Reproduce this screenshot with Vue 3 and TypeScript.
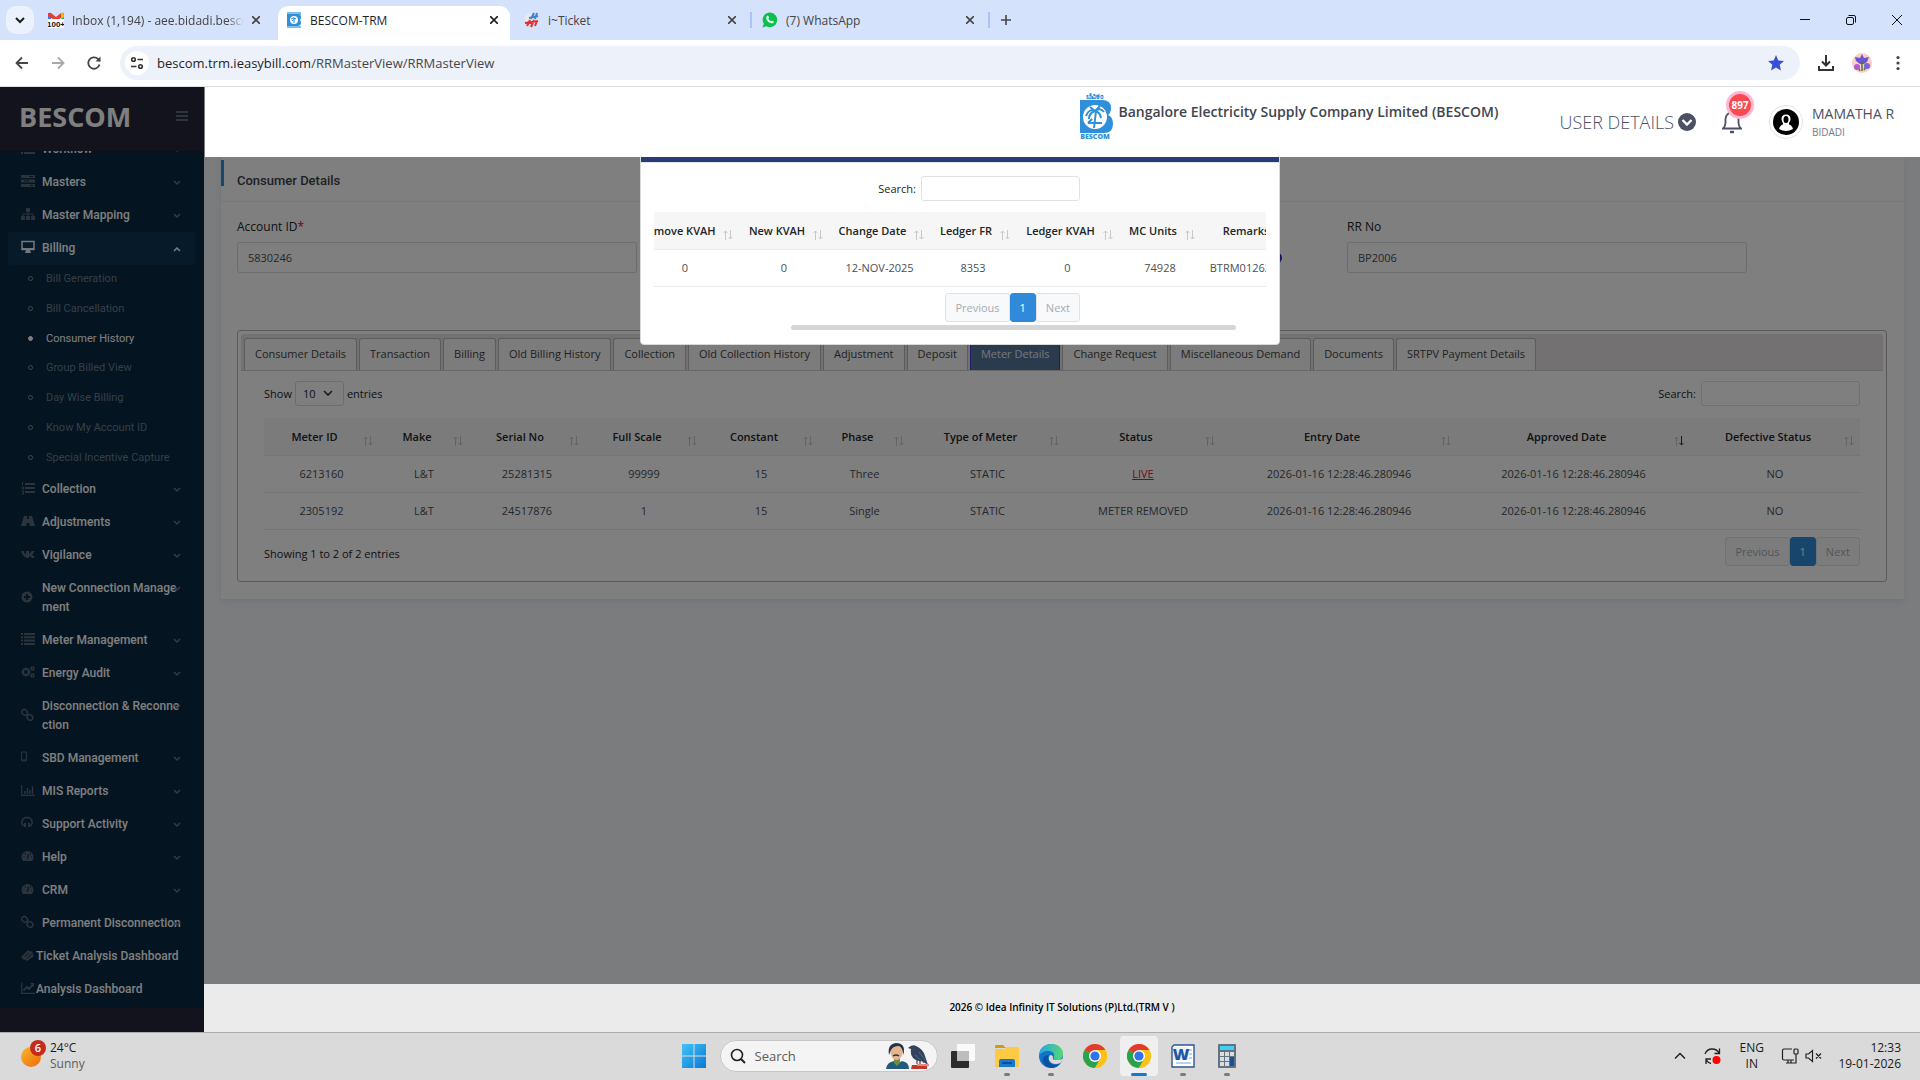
<script setup lang="ts">
import { ref } from 'vue'

interface BrowserTab { title: string; icon: string; active?: boolean; faded?: boolean }
interface MenuItem { label: string; icon: string; chevron: boolean; open?: boolean; tight?: boolean; children?: string[] }

const glyphs: Record<string, string> = {
  mail: '<rect x="0" y="1" width="3" height="7" fill="#2f7de9"/><rect x="13" y="1" width="3" height="7" fill="#2aa14d"/><path d="M0 2Q1 0 3 1L8 5l5-4q3-1 3 1v2L8 9 0 4z" fill="#ea3a32"/><path d="M13 1q3-1 3 2v2l-3 2z" fill="#fbbc04"/><rect y="7" width="16" height="9" fill="#fff"/><text x="8" y="15" font-size="8" font-weight="700" text-anchor="middle" font-family="Liberation Sans, sans-serif" fill="#111">100+</text>',
  ticket: '<circle cx="5" cy="6" r="4.500" fill="#e9e9ee"/><path d="M3 14l3-6M7 15l3-7M11 14l2-5M1 11l13-2" stroke="#e8302c" stroke-width="2" fill="none"/><path d="M7 7l3-6M11 7l2-6M5 6l9-2" stroke="#3f86c4" stroke-width="2" fill="none"/>',
  whatsapp: '<path d="M8 .5a7.300 7.300 0 1 1-3.600 13.700L.5 15.500l1.300-3.800A7.300 7.300 0 0 1 8 .5z" fill="#0ac14e"/><path d="M5 4.200c.6-.6 1.200-.4 1.500.3l.5 1.300-.7 1c.6 1.200 1.400 2 2.600 2.500l1-.9 1.500.8c.6.4.4 1.100 0 1.600-1 1-2.400.7-4-.2C5.600 9.500 4.300 7.600 4.200 6c0-.8.3-1.400.8-1.800z" fill="#fff"/>',
  bescom: '<rect x="1" y="0" width="14" height="3" fill="#7dbdea"/><path d="M1 2h10q4 0 4 3 0 2-1 3 1 1 1 3 0 3-4 3H1z" fill="#2f8fd8"/><circle cx="8" cy="8" r="4" fill="#fff"/><path d="M5 7q3-3 5 0M8 6v5M6 9l3-3" stroke="#2f8fd8" fill="none"/><rect x="1" y="14" width="14" height="2" fill="#7dbdea"/>',
}

const menuGlyphs: Record<string, string> = {
  server: '<path d="M0 1h14v3H0zM0 5.500h14v3H0zM0 10h14v3H0z" fill="currentColor"/><path d="M8 2.500h4M3 7h5M9 11.500h3" stroke="#082842"/>',
  sitemap: '<path d="M5 1h4v4H5zM0 9h4v4H0zM5 9h4v4H5zM10 9h4v4h-4z" fill="currentColor"/><path d="M7 5v4M2 9V7h10v2" fill="none" stroke="currentColor"/>',
  desktop: '<path d="M1 1.500h12v8H1z" fill="none" stroke="currentColor" stroke-width="1.500"/><path d="M1 8h12v2H1zM5 10h4l1 3H4z" fill="currentColor"/>',
  listOl: '<path d="M4 3h10M4 7h10M4 11h10" stroke="currentColor" stroke-width="2"/><path d="M1.500 1v3M0.500 6h2v2h-2M0.500 10h2v3h-2" fill="none" stroke="currentColor"/>',
  road: '<path d="M3 2h3.200L6 5h2l-.2-3H11l3 10H8.500L8.300 9H5.700l-.2 3H0z" fill="currentColor"/>',
  vk: '<path d="M0 4h2.500Q4 7.500 5 7.500V4h3v3Q9.500 6.500 10.500 4H13.500Q13 6 11 7.500q2 1.500 3 3.500h-3Q9.500 9 8 9v2H6.500Q2.500 11 0 4z" fill="currentColor"/>',
  plus: '<circle cx="6" cy="7" r="5.500" fill="currentColor"/><path d="M6 4v6M3 7h6" stroke="#082842" stroke-width="2"/>',
  list: '<path d="M3 2h11M3 5.300h11M3 8.600h11M3 12h11" stroke="currentColor" stroke-width="2"/><path d="M0 2h2M0 5.300h2M0 8.600h2M0 12h2" stroke="currentColor" stroke-width="2"/>',
  gears: '<circle cx="5" cy="7" r="3" fill="none" stroke="currentColor" stroke-width="2"/><path d="M5 2.500v1.500M5 10v1.500M.5 7H2M8 7h1.500M2 4l1 1M2 10l1-1M8 4L7 5M8 10L7 9" stroke="currentColor" stroke-width="1.500"/><circle cx="11.500" cy="3.500" r="1.500" fill="none" stroke="currentColor" stroke-width="1.500"/><circle cx="11.500" cy="10.500" r="1.500" fill="none" stroke="currentColor" stroke-width="1.500"/>',
  link: '<rect x="1" y="2" width="6" height="5" rx="2.500" transform="rotate(45 4 4)" fill="none" stroke="currentColor" stroke-width="1.500"/><rect x="6" y="7" width="6" height="5" rx="2.500" transform="rotate(45 9 9.500)" fill="none" stroke="currentColor" stroke-width="1.500"/>',
  mobile: '<rect x=".5" y="2" width="5" height="9" rx="1" fill="none" stroke="currentColor" stroke-width="1.200"/><path d="M1 10h4" stroke="currentColor"/>',
  bars: '<path d="M.7 2v10.300H14" fill="none" stroke="currentColor" stroke-width="1.200"/><path d="M4 8v3M6.500 5v6M9 7v4M11.500 3.500V11" stroke="currentColor" stroke-width="1.500"/>',
  headphones: '<path d="M2.500 10Q.7 8 .8 6.500C1.200 3 3.500 1.500 6 1.500s4.800 1.500 5.200 5Q11.300 8 9.500 10" fill="none" stroke="currentColor" stroke-width="1.500"/><path d="M3 7h2v4H3zM7 7h2v4H7z" fill="currentColor"/>',
  dash: '<path d="M2 12A6 6 0 1 1 11 12z" fill="currentColor"/><path d="M6.500 10L7.500 5M2.500 8h1M4 4.500l.8.800M9 5.300l.8-.8M10 8h1" stroke="#082842" stroke-width="1.200"/>',
  ticketMenu: '<path d="M0 9l7-7 1.500 1.500 1.500-.5 2 2-.5 1.500L13 8l-7 5-1.500-1.500L3 12l-2-2z" fill="currentColor"/><path d="M3.500 9l4.500-4.500M6 10.500L10.500 6" stroke="#082842"/>',
  line: '<path d="M.7 1.500v10.800H14" fill="none" stroke="currentColor" stroke-width="1.200"/><path d="M2.500 9.500L6 6l2 2 4-4.500" fill="none" stroke="currentColor" stroke-width="2"/><path d="M9 2h4v4z" fill="currentColor"/>',
}

const browserTabs: BrowserTab[] = [
  { title: 'Inbox (1,194) - aee.bidadi.besco', icon: 'mail', faded: true },
  { title: 'BESCOM-TRM', icon: 'bescom', active: true },
  { title: 'i~Ticket', icon: 'ticket' },
  { title: '(7) WhatsApp', icon: 'whatsapp' },
]

const menu: MenuItem[] = [
  { label: 'Workflow', icon: 'list', chevron: true },
  { label: 'Masters', icon: 'server', chevron: true },
  { label: 'Master Mapping', icon: 'sitemap', chevron: true },
  {
    label: 'Billing', icon: 'desktop', chevron: true, open: true,
    children: ['Bill Generation', 'Bill Cancellation', 'Consumer History', 'Group Billed View', 'Day Wise Billing', 'Know My Account ID', 'Special Incentive Capture'],
  },
  { label: 'Collection', icon: 'listOl', chevron: true },
  { label: 'Adjustments', icon: 'road', chevron: true },
  { label: 'Vigilance', icon: 'vk', chevron: true },
  { label: 'New Connection Management', icon: 'plus', chevron: true },
  { label: 'Meter Management', icon: 'list', chevron: true },
  { label: 'Energy Audit', icon: 'gears', chevron: true },
  { label: 'Disconnection & Reconnection', icon: 'link', chevron: true },
  { label: 'SBD Management', icon: 'mobile', chevron: true },
  { label: 'MIS Reports', icon: 'bars', chevron: true },
  { label: 'Support Activity', icon: 'headphones', chevron: true },
  { label: 'Help', icon: 'dash', chevron: true },
  { label: 'CRM', icon: 'dash', chevron: true },
  { label: 'Permanent Disconnection', icon: 'link', chevron: true },
  { label: 'Ticket Analysis Dashboard', icon: 'ticketMenu', chevron: false, tight: true },
  { label: 'Analysis Dashboard', icon: 'line', chevron: false, tight: true },
]

const detailTabs = ['Consumer Details', 'Transaction', 'Billing', 'Old Billing History', 'Collection', 'Old Collection History', 'Adjustment', 'Deposit', 'Meter Details', 'Change Request', 'Miscellaneous Demand', 'Documents', 'SRTPV Payment Details']
const activeTab = ref('Meter Details')

const meterColumns = [
  { label: 'Meter ID', width: 115 }, { label: 'Make', width: 90 }, { label: 'Serial No', width: 116 },
  { label: 'Full Scale', width: 118 }, { label: 'Constant', width: 116 }, { label: 'Phase', width: 91 },
  { label: 'Type of Meter', width: 155 }, { label: 'Status', width: 156 }, { label: 'Entry Date', width: 236 },
  { label: 'Approved Date', width: 233 }, { label: 'Defective Status', width: 170 },
]
const totalWidth = meterColumns.reduce((sum, c) => sum + c.width, 0)
const meterRows = [
  ['6213160', 'L&T', '25281315', '99999', '15', 'Three', 'STATIC', 'LIVE', '2026-01-16 12:28:46.280946', '2026-01-16 12:28:46.280946', 'NO'],
  ['2305192', 'L&T', '24517876', '1', '15', 'Single', 'STATIC', 'METER REMOVED', '2026-01-16 12:28:46.280946', '2026-01-16 12:28:46.280946', 'NO'],
]

const changeColumns = [
  { label: 'Remove KVAH', width: 108 }, { label: 'New KVAH', width: 90 }, { label: 'Change Date', width: 101 },
  { label: 'Ledger FR', width: 86 }, { label: 'Ledger KVAH', width: 103 }, { label: 'MC Units', width: 82 }, { label: 'Remarks', width: 104 },
]
const changeRow = ['0', '0', '12-NOV-2025', '8353', '0', '74928', 'BTRM012620261']

const accountId = ref('5830246')
const rrNo = ref('BP2006')
const pageSize = ref('10')
const tableSearch = ref('')
const modalSearch = ref('')
</script>

<template>
  <div class="screen">
    <header class="chrome">
      <div class="tabstrip">
        <button class="tab-search" aria-label="Search tabs"><svg width="10" height="8" viewBox="0 0 10 8"><path d="M1 2l4 4 4-4" fill="none" stroke="#1f1f1f" stroke-width="2" /></svg></button>
        <div v-for="t in browserTabs" :key="t.title" class="btab" :class="{ active: t.active, divided: !t.active && !t.faded }">
          <div class="btab-body">
            <svg class="fav" viewBox="0 0 16 16" v-html="glyphs[t.icon]"></svg>
            <span class="btab-title" :class="{ faded: t.faded }">{{ t.title }}</span>
            <button class="close" aria-label="Close tab"><svg width="8" height="8" viewBox="0 0 8 8"><path d="M0 0l8 8M8 0L0 8" stroke="currentColor" stroke-width="1.600" /></svg></button>
          </div>
        </div>
        <button class="new-tab" aria-label="New tab"><svg width="10" height="10" viewBox="0 0 10 10"><path d="M5 0v10M0 5h10" stroke="#474747" stroke-width="1.600" /></svg></button>
        <div class="window-controls">
          <button aria-label="Minimize"><svg width="10" height="10" viewBox="0 0 10 10"><path d="M0 4.500h10" stroke="#111" /></svg></button>
          <button aria-label="Restore"><svg width="10" height="10" viewBox="0 0 10 10"><rect x=".5" y="2.500" width="7" height="7" rx="1.500" fill="none" stroke="#111" /><path d="M2.500 .5H8Q9.500.5 9.500 2V7.500" fill="none" stroke="#111" /></svg></button>
          <button aria-label="Close"><svg width="10" height="10" viewBox="0 0 10 10"><path d="M0 0l10 10M10 0L0 10" stroke="#111" /></svg></button>
        </div>
      </div>
      <div class="toolbar">
        <button class="tool" aria-label="Back"><svg width="16" height="16" viewBox="0 0 16 16"><path d="M14 8H3M8 2.500L2.500 8 8 13.500" fill="none" stroke="#474747" stroke-width="1.800" /></svg></button>
        <button class="tool" aria-label="Forward"><svg width="16" height="16" viewBox="0 0 16 16"><path d="M2 8h11M8 2.500L13.500 8 8 13.500" fill="none" stroke="#a8a8a8" stroke-width="1.800" /></svg></button>
        <button class="tool" aria-label="Reload"><svg width="16" height="16" viewBox="0 0 16 16"><path d="M13.500 9.500A5.700 5.700 0 1 1 12 4l2 2" fill="none" stroke="#474747" stroke-width="1.800" /><path d="M14.500 1.500v5h-5z" fill="#474747" /></svg></button>
        <div class="omnibox">
          <button class="site-info" aria-label="Site information"><svg width="14" height="14" viewBox="0 0 14 14" fill="none" stroke="#333" stroke-width="1.600"><circle cx="3.500" cy="3.500" r="1.800" /><path d="M7.500 3.500H13M1 10.500h5.500" /><circle cx="10.500" cy="10.500" r="1.800" /></svg></button>
          <p class="url"><span>bescom.trm.ieasybill.com</span>/RRMasterView/RRMasterView</p>
          <svg class="star" width="16" height="16" viewBox="0 0 16 16"><path d="M8 0l2.300 5.400 5.700.5-4.300 3.800L13 15.500l-5-3-5 3 1.300-5.800L0 5.900l5.700-.5z" fill="#3b50d6" /></svg>
        </div>
        <div class="tool-right">
          <button class="tool" aria-label="Downloads"><svg width="18" height="18" viewBox="0 0 18 18" fill="none" stroke="#333" stroke-width="2"><path d="M9 1v10M5 7.500l4 4 4-4M2 12v4h14v-4" /></svg></button>
          <button class="tool" aria-label="Profile"><svg width="20" height="20" viewBox="0 0 20 20"><circle cx="10" cy="10" r="10" fill="#f8cfc8" /><path d="M10 1l2 4 5-1-2 5-3 2H8L4 8 3 4l5 1z" fill="#6a55cf" /><path d="M10 9v9M8 18l-2-4M12 17l3-5" stroke="#4c7a3a" stroke-width="1.500" /><circle cx="5" cy="14" r="3" fill="#b25ad0" /><circle cx="15" cy="13" r="3" fill="#7d62d8" /></svg></button>
          <button class="tool" aria-label="Menu"><svg width="4" height="16" viewBox="0 0 4 16" fill="#444"><circle cx="2" cy="2.500" r="1.600" /><circle cx="2" cy="8" r="1.600" /><circle cx="2" cy="13.500" r="1.600" /></svg></button>
        </div>
      </div>
    </header>

    <div class="page">
      <aside class="sidebar">
        <div class="brand">
          <span>BESCOM</span>
          <button aria-label="Toggle menu"><svg width="12" height="10" viewBox="0 0 12 10"><path d="M0 1h12M0 5h12M0 9h12" stroke="#5d6b7c" stroke-width="2" /></svg></button>
        </div>
        <nav class="nav">
          <ul class="menu">
            <li v-for="m in menu" :key="m.label">
              <a href="#" class="item" :class="{ open: m.open, tight: m.tight }">
                <svg class="menu-icon" viewBox="0 0 14 14" v-html="menuGlyphs[m.icon]"></svg>
                <span class="item-label">{{ m.label }}</span>
                <svg v-if="m.chevron" class="chev" viewBox="0 0 8 6"><path :d="m.open ? 'M1 5l3-3 3 3' : 'M1 1l3 3 3-3'" fill="none" stroke="currentColor" stroke-width="1.500" /></svg>
              </a>
              <ul v-if="m.children" class="submenu">
                <li v-for="c in m.children" :key="c"><a href="#" :class="{ current: c === 'Consumer History' }"><i class="dot"></i>{{ c }}</a></li>
              </ul>
            </li>
          </ul>
        </nav>
      </aside>

      <div class="main">
        <header class="topbar">
          <svg class="logo" width="34" height="48" viewBox="0 0 34 48">
            <text x="15" y="7" text-anchor="middle" font-size="8" font-weight="700" fill="#2f8fd8">ಬೆವಿಕಂ</text>
            <path d="M0 8h22q9 0 9 8 0 5-3 7 5 2 5 9 0 9-9 9H0z" fill="#2f8fd8" />
            <ellipse cx="15" cy="25" rx="12" ry="12" fill="#fff" />
            <path d="M6 24q3-8 9-5 5-4 9 1M15 19q-6 2-6 8M15 19q5 1 6 7M16 19l-2 17M8 31h14M12 27l-4 4M10 15l5 4 5-5" fill="none" stroke="#2f8fd8" stroke-width="2" />
            <text x="15" y="47" text-anchor="middle" font-size="7" font-weight="800" fill="#2f8fd8">BESCOM</text>
          </svg>
          <h1 class="company">Bangalore Electricity Supply Company Limited (BESCOM)</h1>
          <button class="user-details">USER DETAILS
            <svg width="18" height="18" viewBox="0 0 18 18"><circle cx="9" cy="9" r="9" fill="#4b5064" /><path d="M4.500 7L9 11.500 13.500 7" fill="none" stroke="#fff" stroke-width="2.400" /></svg>
          </button>
          <button class="bell" aria-label="Notifications">
            <svg width="20" height="24" viewBox="0 0 20 24" fill="none" stroke="#4b5064" stroke-width="1.800"><path d="M1 18.500h18Q16.500 16 16.500 13V9a6.500 6.500 0 0 0-13 0v4Q3.500 16 1 18.500z" /><path d="M8 22h4" stroke-width="2.400" /></svg>
            <span class="badge">897</span>
          </button>
          <div class="avatar"><svg width="26" height="26" viewBox="0 0 26 26"><circle cx="13" cy="13" r="13" fill="#000" /><path d="M6 20q1-4 4-4.500V14Q8.500 12.500 8.500 10q0-4.500 4.500-4.500t4.500 4.500q0 2.500-1.500 4v1.500Q19 16 20 20q-7 4-14 0z" fill="#fff" /><ellipse cx="13" cy="10.500" rx="2.500" ry="3.500" fill="#000" /></svg></div>
          <div class="who"><strong>MAMATHA R</strong><span>BIDADI</span></div>
        </header>

        <main class="content">
          <section class="card">
            <h2 class="card-head">Consumer Details</h2>
            <div class="card-body">
              <div class="fields">
                <div class="field">
                  <label for="account">Account ID<em>*</em></label>
                  <input id="account" v-model="accountId" type="text" />
                </div>
                <div class="field lookup"><button aria-label="Find account"><svg width="14" height="14" viewBox="0 0 14 14"><circle cx="7" cy="7" r="5" fill="none" stroke="#2630b8" stroke-width="2" /></svg></button></div>
                <div class="field">
                  <label for="rrno">RR No</label>
                  <input id="rrno" v-model="rrNo" type="text" />
                </div>
              </div>

              <div class="panel">
                <div class="detail-tabs" role="tablist">
                  <button v-for="t in detailTabs" :key="t" role="tab" :class="{ on: t === activeTab }" @click="activeTab = t">{{ t }}</button>
                </div>
                <div class="panel-body">
                  <div class="controls">
                    <label class="length">Show
                      <span class="select-wrap">
                        <select v-model="pageSize"><option>10</option><option>25</option></select>
                        <svg width="10" height="6" viewBox="0 0 10 6"><path d="M1 1l4 4 4-4" fill="none" stroke="#333" stroke-width="1.600" /></svg>
                      </span>
                      entries</label>
                    <label class="search">Search:<input v-model="tableSearch" type="text" /></label>
                  </div>
                  <table class="grid">
                    <colgroup><col v-for="c in meterColumns" :key="c.label" :style="{ width: (c.width / totalWidth) * 100 + '%' }" /></colgroup>
                    <thead>
                      <tr><th v-for="c in meterColumns" :key="c.label"><div class="th">{{ c.label }}<svg class="sort" viewBox="0 0 10 10"><path d="M2.500 10V1M.5 3l2-2 2 2" /><path :class="{ dark: c.label === 'Approved Date' }" d="M7.500 0v9M5.500 7l2 2 2-2" /></svg></div></th></tr>
                    </thead>
                    <tbody>
                      <tr v-for="(r, i) in meterRows" :key="i">
                        <td v-for="(v, j) in r" :key="j"><a v-if="v === 'LIVE'" href="#" class="live">{{ v }}</a><template v-else>{{ v }}</template></td>
                      </tr>
                    </tbody>
                  </table>
                  <div class="table-foot">
                    <p>Showing 1 to 2 of 2 entries</p>
                    <div class="pager"><button disabled>Previous</button><button class="cur">1</button><button disabled>Next</button></div>
                  </div>
                </div>
              </div>
            </div>
          </section>
        </main>
        <footer class="footer">2026 © Idea Infinity IT Solutions (P)Ltd.(TRM V )</footer>
      </div>

      <div class="backdrop"></div>
      <div class="modal" role="dialog" aria-label="Meter change details">
        <div class="modal-head"></div>
        <div class="modal-body">
          <label class="search modal-search">Search:<input v-model="modalSearch" type="text" /></label>
          <div class="scroller">
            <table class="grid wide">
              <colgroup><col v-for="c in changeColumns" :key="c.label" :style="{ width: c.width + 'px' }" /></colgroup>
              <thead>
                <tr><th v-for="c in changeColumns" :key="c.label"><div class="th">{{ c.label }}<svg class="sort" viewBox="0 0 10 10"><path d="M2.500 10V1M.5 3l2-2 2 2" /><path d="M7.500 0v9M5.500 7l2 2 2-2" /></svg></div></th></tr>
              </thead>
              <tbody><tr><td v-for="(v, j) in changeRow" :key="j">{{ v }}</td></tr></tbody>
            </table>
          </div>
          <div class="pager modal-pager"><button disabled>Previous</button><button class="cur">1</button><button disabled>Next</button></div>
          <div class="track"><div class="thumb"></div></div>
        </div>
      </div>
    </div>

    <footer class="taskbar">
      <div class="weather">
        <svg width="26" height="28" viewBox="0 0 26 28">
          <defs><linearGradient id="sun" x1="0" y1="0" x2="1" y2="1"><stop offset="0" stop-color="#f5b729" /><stop offset="1" stop-color="#f26a0c" /></linearGradient></defs>
          <circle cx="10" cy="17" r="10" fill="url(#sun)" /><circle cx="17" cy="8" r="8" fill="#c42b1c" />
          <text x="17" y="12" text-anchor="middle" font-size="11" font-weight="600" fill="#fff">6</text>
        </svg>
        <p><span>24°C</span><small>Sunny</small></p>
      </div>
      <div class="dock">
        <button class="app" aria-label="Start"><svg width="24" height="24" viewBox="0 0 24 24"><defs><linearGradient id="win" x1="0" y1="0" x2="1" y2="1" gradientUnits="objectBoundingBox"><stop offset="0" stop-color="#42c3f7" /><stop offset="1" stop-color="#0a78d4" /></linearGradient></defs><path d="M0 0h11.500v11.500H0zM12.500 0H24v11.500H12.500zM0 12.500h11.500V24H0zM12.500 12.500H24V24H12.500z" fill="url(#win)" /></svg></button>
        <label class="task-search">
          <svg width="16" height="16" viewBox="0 0 16 16"><circle cx="7" cy="7" r="5.500" fill="none" stroke="#222" stroke-width="1.600" /><path d="M11 11l4 4" stroke="#222" stroke-width="2" /></svg>
          <input type="text" placeholder="Search" aria-label="Search" />
          <svg width="46" height="26" viewBox="0 0 46 26">
            <path d="M1 26q1-7 8-8l3 3 5-3q7 1 7 8z" fill="#235b7c" /><path d="M9 14h6v6l-3 3-3-3z" fill="#6d8f3d" /><ellipse cx="11.500" cy="9.500" rx="6" ry="7.500" fill="#e6b58c" /><path d="M4 12Q2 1 11 0q9 0 8 9l-1 3q0-7-4-9Q8 3 6 7z" fill="#26324a" /><path d="M8 13q3-2 6 0" stroke="#26324a" stroke-width="1.500" fill="none" />
            <path d="M23 5q4-4 8-2 7 3 9 10l3 9-6-4q-5 1-9-3-3-4-2-9z" fill="#33435e" /><path d="M30 12l9 8M34 9l6 8" stroke="#52688c" /><path d="M27 22h15v4H26z" fill="#c1372e" /><path d="M32 21h12v2H32z" fill="#e78780" /><path d="M32 17v4M35 17v4" stroke="#222" />
          </svg>
        </label>
        <button class="app" aria-label="Task view"><svg width="24" height="24" viewBox="0 0 24 24"><rect x="6" width="18" height="17" rx="1" fill="#fafafa" /><rect y="7" width="18" height="17" rx="1" fill="#2c2c2c" /><rect x="6" y="7" width="12" height="10" fill="#bdbdbd" /></svg></button>
        <button class="app run" aria-label="File Explorer"><svg width="24" height="24" viewBox="0 0 24 24"><path d="M0 2q0-1 1-1h7l3 3H0z" fill="#d99a06" /><path d="M0 5h10l2-2h11q1 0 1 1v18q0 1-1 1H1q-1 0-1-1z" fill="#fdcb43" /><path d="M4 23v-6q0-2 2-2h12q2 0 2 2v6z" fill="#1479cf" /><path d="M7 19h10" stroke="#0b4f94" stroke-width="2" /></svg></button>
        <button class="app run" aria-label="Edge"><svg width="24" height="24" viewBox="0 0 24 24"><defs><linearGradient id="edge" x1="0" y1="0" x2="1" y2="0"><stop offset="0" stop-color="#25a6e8" /><stop offset="1" stop-color="#58d66f" /></linearGradient></defs><circle cx="12" cy="12" r="12" fill="#1173c9" /><path d="M0 12C0 5 5 0 12 0c8 0 12 5 12 10 0 4-3 6-6 6-3 0-4-1-3-3 1-4-2-6-6-6-4 0-8 2-9 5z" fill="url(#edge)" /><path d="M11 11c-3 4 0 9 6 9 3 0 5-1 6-3l1-3c-2 2-5 2-7 2-3 0-4-1-3-3 0-1-1-2-3-2z" fill="#dadada" /><path d="M10 11c-3 5 1 10 7 10 2 0 4-1 5-2q-4 5-10 5-6-1-8-6c-1-4 2-7 6-7z" fill="#0f50a0" /></svg></button>
        <button v-for="n in 2" :key="n" class="app" :class="{ front: n === 2 }" aria-label="Chrome"><svg width="24" height="24" viewBox="0 0 24 24"><circle cx="12" cy="12" r="12" fill="#fbc116" /><path d="M12 12L1.600 6A12 12 0 0 1 22.400 6z" fill="#e33b2e" /><path d="M12 12L1.600 6A12 12 0 0 0 12 24l5.200-9z" fill="#2ba24c" /><path d="M12 6h10.400l.1.200A12 12 0 0 1 12 24l5.200-9z" fill="#fbc116" /><circle cx="12" cy="12" r="6" fill="#fff" /><circle cx="12" cy="12" r="4.600" fill="#2f74ea" /></svg></button>
        <button class="app run" aria-label="Word"><svg width="24" height="24" viewBox="0 0 24 24"><path d="M3 1h20v22H1V3z" fill="#fff" stroke="#2b5797" stroke-width="1.400" /><path d="M17 6h4M18 10h3M18 14h3M5 19h15" stroke="#7fa3d6" /><rect x="2" y="3" width="15" height="13" fill="#e8f0fb" /><text x="10" y="16" text-anchor="middle" font-size="16" font-weight="800" fill="#1f56a8">W</text></svg></button>
        <button class="app run" aria-label="Calculator"><svg width="18" height="24" viewBox="0 0 18 24"><rect width="18" height="24" rx="1" fill="#64727f" /><rect x="2" y="2" width="14" height="4" fill="#3fd0f5" /><g fill="#d8dde2"><rect x="2" y="8" width="4" height="4" /><rect x="7" y="8" width="4" height="4" /><rect x="12" y="8" width="4" height="4" /><rect x="2" y="13" width="4" height="4" /><rect x="7" y="13" width="4" height="4" /><rect x="2" y="18" width="4" height="4" /><rect x="7" y="18" width="4" height="4" /></g><rect x="12" y="13" width="4" height="9" fill="#15529c" /></svg></button>
      </div>
      <div class="tray">
        <svg width="12" height="8" viewBox="0 0 12 8"><path d="M1 6.500l5-5 5 5" fill="none" stroke="#222" stroke-width="1.500" /></svg>
        <svg width="18" height="18" viewBox="0 0 18 18"><path d="M1 7Q3 2 8 2q5 0 7 4M15.500 1.500V6.500h-5M7 12H2v5M2 12.500q2 3.500 5 4" fill="none" stroke="#222" stroke-width="1.300" /><circle cx="12.500" cy="13" r="4" fill="#f00" /></svg>
        <p class="lang"><span>ENG</span><span>IN</span></p>
        <div class="status">
          <svg width="18" height="18" viewBox="0 0 18 18" fill="none" stroke="#222" stroke-width="1.200"><path d="M11 2H3Q1.500 2 1.500 3.500v8Q1.500 13 3 13h10M5 16h7M7 13v3M10 13v3M15 7v9H12" /><rect x="13" y="2" width="4" height="5" rx="1" /></svg>
          <svg width="18" height="14" viewBox="0 0 18 14" fill="none" stroke="#222" stroke-width="1.200"><path d="M1 5h2.500L7.500 1.500v11L3.500 9H1zM11 4.500l5 5M16 4.500l-5 5" /></svg>
        </div>
        <p class="clock"><span>12:33</span><span>19-01-2026</span></p>
      </div>
    </footer>
  </div>
</template>

<style>
body { margin: 0; overflow: hidden; }
p, h1, h2, ul { margin: 0; padding: 0; }
ul { list-style: none; }
</style>

<style scoped>
.screen, .screen * { box-sizing: border-box; }
.screen { height: 100vh; display: flex; flex-direction: column; font-family: "Open Sans", "Noto Sans", sans-serif; font-size: 11px; color: #212529; }
button, input, select { font: inherit; color: inherit; }
button { border: 0; background: none; padding: 0; }
a { color: inherit; text-decoration: none; }
svg { flex: none; display: block; }

/* browser window */
.tabstrip { height: 40px; display: flex; align-items: center; background: #d5e2fc; padding-left: 6px; }
.tab-search { width: 28px; height: 28px; border-radius: 10px; background: #ebf2fd; display: grid; place-items: center; margin-right: 6px; }
.btab { width: 238px; height: 40px; padding: 6px 6px 0 0; position: relative; font-size: 12px; color: #444; }
.btab-body { height: 34px; display: flex; align-items: center; padding: 0 8px 6px 8px; border-radius: 10px 10px 0 0; }
.btab.active .btab-body { background: #fff; color: #1f1f1f; }
.btab.divided::after { content: ""; position: absolute; right: 2px; top: 12px; width: 2px; height: 16px; background: #a9c4f7; }
.fav { width: 16px; height: 16px; margin-right: 8px; }
.btab-title { flex: 1; white-space: nowrap; overflow: hidden; }
.btab-title.faded { mask-image: linear-gradient(90deg, #000 90%, transparent); }
.close { width: 16px; height: 16px; margin-left: 4px; display: grid; place-items: center; }
.new-tab { width: 20px; height: 28px; display: grid; place-items: center; margin-left: 4px; }
.window-controls { margin-left: auto; display: flex; }
.window-controls button { width: 46px; height: 40px; display: grid; place-items: center; }
.toolbar { height: 47px; display: flex; align-items: center; padding: 0 4px; border-bottom: 1px solid #dcdfe4; background: #fff; }
.tool { width: 36px; height: 34px; display: grid; place-items: center; }
.omnibox { flex: 1; height: 34px; margin: 0 8px; border-radius: 17px; background: #edf1fa; display: flex; align-items: center; padding: 0 16px 0 5px; }
.site-info { width: 24px; height: 24px; border-radius: 12px; background: #fff; display: grid; place-items: center; margin-right: 8px; }
.url { flex: 1; font-size: 13px; color: #474747; }
.url span { color: #1f1f1f; }
.tool-right { display: flex; }

/* application */
.page { flex: 1; min-height: 0; display: flex; position: relative; overflow: hidden; }
.sidebar { width: 204px; flex: none; background: #24273a; display: flex; flex-direction: column; font-family: Roboto, sans-serif; }
.brand { height: 64px; flex: none; display: flex; align-items: center; justify-content: space-between; padding: 0 16px 6px 19px; color: #fff; font: 700 27px "Open Sans", sans-serif; }
.nav { flex: 1; min-height: 0; margin-bottom: 24px; overflow: hidden; background: #082842; }
.menu { margin-top: -18px; }
.item { position: relative; min-height: 33px; display: flex; align-items: center; margin: 0 9px 0 8px; padding: 7px 12px 7px 13px; border-radius: 3px; color: #fff; font-size: 12px; font-weight: 500; line-height: 19px; }
.item.open { background: #0c3454; }
.menu-icon { width: 14px; height: 14px; margin: 0 7px 3px 0; color: #56697a; }
.item.open .menu-icon { color: #e8f0f6; }
.item.tight .menu-icon { margin-right: 1px; }
.item-label { flex: 1; word-break: break-all; }
.chev { position: absolute; right: 14px; top: 14px; width: 8px; height: 6px; color: #65788a; }
.item.open .chev { color: #fff; }
.submenu { height: 208px; display: grid; grid-auto-rows: 1fr; }
.submenu a { height: 100%; display: flex; align-items: center; padding: 0 0 2px 28px; font-size: 11px; color: #6b7f91; }
.submenu .current { color: #fff; }
.dot { width: 5px; height: 5px; border: 1px solid #7e909f; border-radius: 3px; margin-right: 13px; }
.current .dot { background: #fff; border-color: #fff; }

.main { flex: 1; min-width: 0; display: flex; flex-direction: column; background: #f5f8fc; }
.topbar { position: relative; z-index: 3; height: 70px; flex: none; margin-left: 1px; background: #fff; display: flex; align-items: center; justify-content: flex-end; padding-right: 22px; color: #4b5064; }
.logo { margin: 0 4px 12px 0; }
.company { width: 386px; white-space: nowrap; font-size: 14px; font-weight: 600; color: #41464e; margin-bottom: 21px; }
.user-details { display: flex; align-items: center; gap: 4px; font-size: 18px; font-weight: 300; margin-left: 55px; white-space: nowrap; }
.bell { position: relative; margin-left: 26px; }
.badge { position: absolute; left: 4px; top: -19px; width: 28px; height: 28px; border: 3px solid #fcb9d6; border-radius: 14px; background: #fb4a4f; color: #fff; font-size: 10px; font-weight: 700; line-height: 22px; text-align: center; }
.avatar { width: 34px; height: 34px; border: 1px solid #e2e4ea; border-radius: 17px; display: grid; place-items: center; margin: 0 9px 0 27px; }
.who { width: 86px; display: flex; flex-direction: column; white-space: nowrap; }
.who strong { font-size: 14px; font-weight: 400; line-height: 20px; }
.who span { font-size: 10px; line-height: 16px; color: #74788d; }

.content { flex: 1; padding: 0 16px 0 17px; }
.card { background: #fff; box-shadow: 0 3px 6px #e2e6ee; }
.card-head { height: 45px; padding: 14px 16px; border-bottom: 1px solid #eceef1; font: 500 13px/20px Roboto, sans-serif; color: #3d4248; background: linear-gradient(#2f8fd8, #2f8fd8) 0 3px / 3px 26px no-repeat; }
.card-body { padding: 16px 17px 17px 16px; }
.fields { display: grid; grid-template-columns: 400px 1fr 400px; gap: 155px; margin-right: 140px; height: 112px; }
.field label { display: block; line-height: 18px; margin-bottom: 6px; font-size: 12px; }
.field em { color: #e00; font-style: normal; }
.field input { width: 100%; height: 31px; border: 1px solid #d8dadd; border-radius: 3px; padding: 0 10px; background: #fff; color: #495057; }
.lookup { display: flex; justify-content: flex-end; padding-top: 33px; margin-right: -91px; align-items: flex-start; }
.panel { border: 1px solid #b5b5b5; border-radius: 3px; padding: 3px; height: 252px; }
.detail-tabs { display: flex; gap: 2px; height: 37px; padding: 4px 3px 0; border-bottom: 1px solid #cfcfcf; background: #e6e2e2; border-radius: 3px 3px 0 0; overflow: hidden; }
.detail-tabs button { padding: 0 10px 2px; border: 1px solid #b9b9b9; border-bottom: 0; border-radius: 3px 3px 0 0; background: #f8f8f8; color: #444; white-space: nowrap; }
.detail-tabs .on { background: #54769a; border-color: #3a3fd0; color: #e8edf4; }
.panel-body { padding: 10px 23px; }
.controls { display: flex; justify-content: space-between; }
.length { display: flex; align-items: center; gap: 3px; }
.select-wrap { position: relative; }
.select-wrap select { appearance: none; width: 49px; height: 25px; padding: 0 7px; border: 1px solid #d8dadd; border-radius: 3px; background: #fff; display: block; }
.select-wrap svg { position: absolute; right: 11px; top: 9px; pointer-events: none; }
.search { display: flex; align-items: center; gap: 5px; }
.search input { width: 159px; height: 25px; border: 1px solid #dfe1e4; border-radius: 3px; background: #fff; }
.grid { width: 100%; table-layout: fixed; border-collapse: collapse; margin-top: 12px; text-align: center; }
.grid tr { height: 37px; }
.grid th, .grid td { padding: 0; border-bottom: 1px solid #e9ebee; white-space: nowrap; }
.grid th { background: #f6f6f6; font-size: 11px; font-weight: 600; color: #212529; }
.grid td { color: #495057; }
.th { position: relative; padding-right: 14px; }
.sort { position: absolute; right: 6px; top: 7px; width: 10px; height: 10px; fill: none; stroke: #c6c8ca; stroke-width: 1; }
.sort .dark { stroke: #333; }
.live { color: #e0143c; text-decoration: underline; }
.table-foot { display: flex; justify-content: space-between; padding-top: 7px; }
.table-foot p { line-height: 34px; }
.pager { display: flex; height: 29px; }
.pager button { height: 29px; padding: 0 9px; border: 1px solid #dfe3e8; background: #f8f9fb; color: #a5acb4; border-radius: 3px; }
.pager .cur { background: #2f8bd9; border-color: #2f8bd9; color: #fff; }
.footer { position: relative; z-index: 3; height: 48px; flex: none; background: #ebebeb; color: #000; text-align: center; font-size: 10px; font-weight: 600; line-height: 47px; }

.backdrop { position: absolute; inset: 0; background: rgba(0, 0, 0, .5); z-index: 1; }
.modal { position: absolute; z-index: 2; left: 0; right: 0; top: 20px; margin: 0 auto; width: 640px; background: #fff; border: 1px solid #d9d9d9; border-radius: 4px; overflow: hidden; }
.modal-head { height: 55px; background: #293b74; border-bottom: 1px solid #e3e5ea; }
.modal-body { padding: 13px; }
.modal-search, .modal-pager { justify-content: flex-end; padding-right: 186px; }
.scroller { overflow: hidden; }
.wide { width: 674px; margin-top: 11px; margin-left: -23px; }
.modal-pager { margin-top: 6px; }
.track { height: 6px; margin-top: 3px; }
.thumb { width: 445px; height: 5px; margin-left: 137px; border-radius: 3px; background: #d5d6d8; }

/* desktop taskbar */
.taskbar { height: 48px; flex: none; border-top: 1px solid #adadad; background: #dadada; display: grid; grid-template-columns: 1fr auto 1fr; align-items: center; padding-bottom: 2px; font-size: 12px; color: #1b1b1b; }
.weather { display: flex; align-items: center; padding-left: 21px; gap: 3px; }
.weather svg { margin-bottom: 4px; }
.weather p { display: flex; flex-direction: column; line-height: 16px; }
.weather small { font-size: 12px; color: #5c5c5c; }
.dock { display: flex; align-items: center; }
.app { position: relative; width: 44px; height: 40px; display: grid; place-items: center; }
.run::after, .front::after { content: ""; position: absolute; bottom: 0; width: 6px; height: 3px; border-radius: 2px; background: #7a7a7a; }
.front { width: 38px; margin: 0 3px; background: #efefef; border-radius: 4px; }
.front::after { width: 16px; background: #0f7bd6; }
.task-search { width: 218px; height: 32px; margin: 0 3px 0 4px; padding: 0 6px 0 9px; border: 1px solid #c8c8c8; border-radius: 16px; background: #f4f4f4; display: flex; align-items: center; }
.task-search input { flex: 1; min-width: 0; border: 0; background: none; padding: 0 0 0 9px; font-size: 13px; outline: 0; }
.task-search input::placeholder { color: #5b5b5b; opacity: 1; }
.tray { display: flex; align-items: center; justify-content: flex-end; padding-right: 19px; line-height: 16px; }
.tray p { display: flex; flex-direction: column; }
.tray .lang { text-align: center; margin: 0 17px 0 18px; }
.tray > svg + svg { margin-left: 18px; }
.status { display: flex; align-items: center; gap: 6px; margin-right: 14px; }
.clock { width: 64px; text-align: right; }
</style>
